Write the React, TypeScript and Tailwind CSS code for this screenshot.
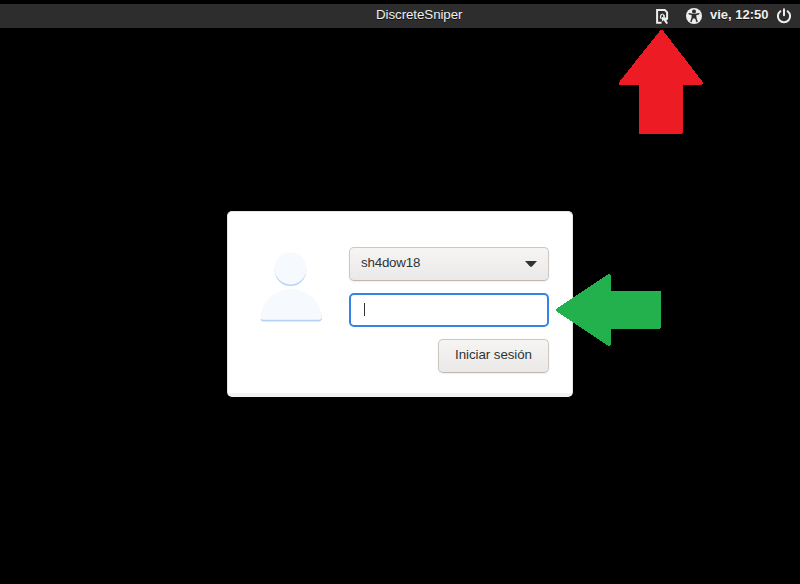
function SessionIcon() {
  return (
    <svg width="16" height="18" viewBox="0 0 16 18" fill="none" className="relative top-px shrink-0">
      <path d="M7.6 14.8H3.1V2H10.8L13.1 4.3V11" stroke="#eeeeec" strokeWidth="2" />
      <path d="M7.6 10.9A2.6 2.6 0 0 1 8.6 6.2" stroke="#eeeeec" strokeWidth="1.3" />
      <path d="M8.6 5.5L10.8 7.3V9.5H14V11.4L12.4 12.3L14 15.2L12.3 16L9.6 12.3L8 13.6V8.8L9.5 9.6Z" fill="#eeeeec" />
    </svg>
  );
}

function AccessibilityIcon() {
  return (
    <svg width="16" height="16" viewBox="0 0 16 16" className="shrink-0">
      <circle cx="8" cy="8" r="8" fill="#eeeeec" />
      <circle cx="8" cy="3.4" r="2" fill="#2d2d2d" />
      <path
        d="M3.2 5.8L6.5 6.6V9.4L5 13.4M12.8 5.8L9.5 6.6V9.4L11 13.4"
        stroke="#2d2d2d"
        strokeWidth="1.5"
        strokeLinecap="round"
        fill="none"
      />
      <path d="M5.8 5.8H10.2V10.5H5.8Z" fill="#2d2d2d" />
    </svg>
  );
}

function PowerIcon() {
  return (
    <svg width="16" height="16" viewBox="0 0 16 16" fill="none" stroke="#eeeeec" strokeWidth="2" strokeLinecap="round" className="shrink-0">
      <path d="M4.4 3.2A6.1 6.1 0 1 0 11.6 3.2" />
      <path d="M8 1.3V7.2" />
    </svg>
  );
}

function Avatar() {
  return (
    <svg width="64" height="70" viewBox="0 0 64 70" className="shrink-0">
      <circle cx="31.5" cy="18.3" r="15.8" fill="#b5d3f8" />
      <circle cx="31.5" cy="16.5" r="16" fill="#f6f9fe" />
      <path d="M2 65.5C4 49 16 38.5 32 38.5S60 49 62.8 65.5Q63 69.5 59.5 69.5H4.5Q1 69.5 2 65.5Z" fill="#b5d3f8" />
      <path d="M1.5 64C4 48 16 37.3 32 37.3S60 48 62.5 64Q63 67.7 59.5 67.7H4.5Q1 67.7 1.5 64Z" fill="#f6f9fe" />
    </svg>
  );
}

export default function App() {
  return (
    <div className="relative flex h-[584px] w-[800px] flex-col overflow-hidden bg-black pt-1 font-['Liberation_Sans',sans-serif] text-[13.333px]">
      <header className="flex h-6 shrink-0 justify-between bg-[#2d2d2d] pr-2 pl-[376px] text-[#eeeeec]">
        <span className="leading-[22px] tracking-[-0.07px] [text-shadow:0_1px_0_#111]">DiscreteSniper</span>
        <div className="flex items-center justify-end">
          <SessionIcon />
          <span className="ml-4 flex">
            <AccessibilityIcon />
          </span>
          <time className="mr-2 ml-2 w-[58px] text-[13px] leading-[22px] font-bold whitespace-nowrap [text-shadow:0_1px_0_#111]">
            <span className="-mt-[3px] block">vie, 12:50</span>
          </time>
          <PowerIcon />
        </div>
      </header>

      <main className="flex flex-1 items-start justify-center pt-[183px]">
        <form
          onSubmit={(event) => event.preventDefault()}
          className="flex h-[186px] w-[346px] rounded-[5px] border border-b-4 border-[#e4e4e4] border-b-[#f3f4f2] bg-white pt-[35px] pl-[31px]"
        >
          <div className="mt-[5px] w-[90px] shrink-0">
            <Avatar />
          </div>
          <div className="flex w-[200px] flex-col items-end gap-3 text-[#2e3436]">
            <button
              type="button"
              className="flex h-[34px] w-full items-center justify-between rounded-[5px] border border-[#cdc7c2] border-b-[#bfb8b1] bg-linear-to-b from-[#f6f5f4] to-[#ebe9e7] pr-[11px] pb-[2px] pl-[11px] shadow-[0_1px_2px_rgba(0,0,0,0.07)]"
            >
              <span className="tracking-[-0.2px]">sh4dow18</span>
              <svg width="12" height="6" viewBox="0 0 12 6" className="mt-px">
                <path d="M0 0H12L7 5.5Q6 6.2 5 5.5Z" fill="#2e3436" />
              </svg>
            </button>
            <div className="flex h-[34px] w-full items-center rounded-[5px] border-2 border-[#3584e4] bg-white pb-px pl-[13px]">
              <span className="h-[13px] w-px bg-[#2e3436]" />
            </div>
            <button
              type="submit"
              className="h-[34px] w-[111px] rounded-[5px] border border-[#cdc7c2] border-b-[#bfb8b1] bg-linear-to-b from-[#f6f5f4] to-[#ebe9e7] pb-[2px] tracking-[-0.07px] shadow-[0_1px_2px_rgba(0,0,0,0.07)]"
            >
              Iniciar sesión
            </button>
          </div>
        </form>
      </main>

      <svg width="86" height="106" viewBox="0 0 86 106" className="absolute top-[29px] left-[618px]" shapeRendering="crispEdges">
        <path d="M43.5 3L83 54H63V103H23V54H3Z" fill="#ed1c24" stroke="#ed1c24" strokeWidth="4" strokeLinejoin="round" />
      </svg>
      <svg width="107" height="74" viewBox="0 0 107 74" className="absolute top-[273px] left-[555px]" shapeRendering="crispEdges">
        <path d="M3 37L54 3V20H104V54H54V71Z" fill="#22b14c" stroke="#22b14c" strokeWidth="4" strokeLinejoin="round" />
      </svg>
    </div>
  );
}
